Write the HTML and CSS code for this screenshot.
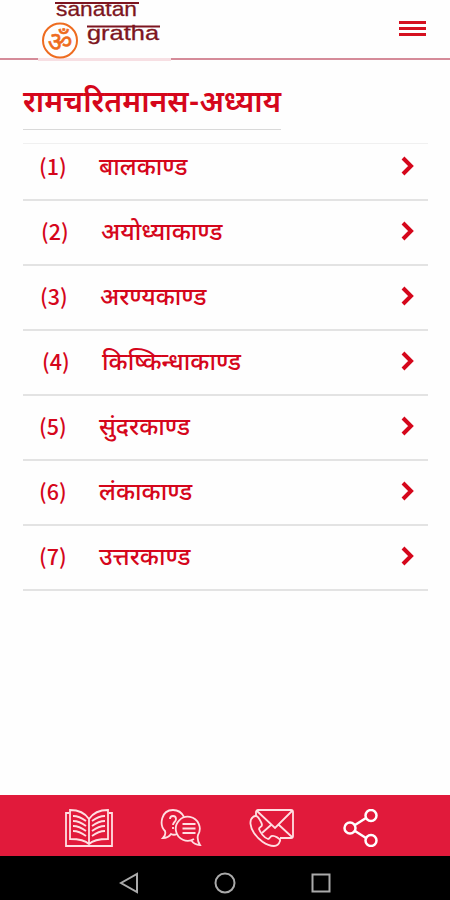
FILE: index.html
```html
<!DOCTYPE html>
<html lang="hi">
<head>
    <meta charset="UTF-8">
    <meta name="viewport" content="width=device-width, initial-scale=1.0">
    <title>रामचरितमानस-अध्याय</title>
    <link rel="stylesheet" href="styles.css">
</head>
<body>
    <!-- Header -->
    <header class="header">
        <svg class="logo" width="134" height="61" viewBox="38 0 134 61">
            <rect class="logo-base" x="38" y="58" width="133" height="3"/>
            <circle class="om-ring" cx="60" cy="40.5" r="17"/>
            <text class="om" x="60" y="50.5" text-anchor="middle">ॐ</text>
            <path class="logo-bar" d="M55 3H139M87 26.500H160"/>
            <text class="logo-text" x="56" y="16" textLength="81" lengthAdjust="spacingAndGlyphs">sanatan</text>
            <text class="logo-text" x="87" y="39.5" textLength="72" lengthAdjust="spacingAndGlyphs">gratha</text>
        </svg>
        <div class="menu">
            <span></span>
            <span></span>
            <span></span>
        </div>
    </header>

    <!-- Chapter list -->
    <main class="content">
        <h1>रामचरितमानस-अध्याय</h1>
        <ul class="chapters">
            <li>
                <span class="num">(1)</span><span class="name">बालकाण्ड</span>
                <svg class="arrow" width="14" height="20" viewBox="0 0 14 20"><path d="M2 2l8 8-8 8"/></svg>
            </li>
            <li class="in-2">
                <span class="num">(2)</span><span class="name">अयोध्याकाण्ड</span>
                <svg class="arrow" width="14" height="20" viewBox="0 0 14 20"><path d="M2 2l8 8-8 8"/></svg>
            </li>
            <li class="in-1">
                <span class="num">(3)</span><span class="name">अरण्यकाण्ड</span>
                <svg class="arrow" width="14" height="20" viewBox="0 0 14 20"><path d="M2 2l8 8-8 8"/></svg>
            </li>
            <li class="in-3">
                <span class="num">(4)</span><span class="name">किष्किन्धाकाण्ड</span>
                <svg class="arrow" width="14" height="20" viewBox="0 0 14 20"><path d="M2 2l8 8-8 8"/></svg>
            </li>
            <li>
                <span class="num">(5)</span><span class="name">सुंदरकाण्ड</span>
                <svg class="arrow" width="14" height="20" viewBox="0 0 14 20"><path d="M2 2l8 8-8 8"/></svg>
            </li>
            <li>
                <span class="num">(6)</span><span class="name">लंकाकाण्ड</span>
                <svg class="arrow" width="14" height="20" viewBox="0 0 14 20"><path d="M2 2l8 8-8 8"/></svg>
            </li>
            <li>
                <span class="num">(7)</span><span class="name">उत्तरकाण्ड</span>
                <svg class="arrow" width="14" height="20" viewBox="0 0 14 20"><path d="M2 2l8 8-8 8"/></svg>
            </li>
        </ul>
    </main>

    <!-- Bottom tabs -->
    <nav class="tabs">
        <!-- book -->
        <svg width="48" height="38" viewBox="0 0 48 38">
            <path d="M4 4H1v33h46V4h-3"/>
            <path d="M24 10C20 4 13 1 5 1v29c8 0 15 1 19 5 4-4 11-5 19-5V1C35 1 28 4 24 10v25"/>
            <path d="M8 7c5 0 9 2 13 5M8 12c5 0 9 2 13 5M8 17c5 0 9 2 13 5M8 22c5 0 9 2 13 5M40 7c-5 0-9 2-13 5M40 12c-5 0-9 2-13 5M40 17c-5 0-9 2-13 5M40 22c-5 0-9 2-13 5"/>
        </svg>
        <!-- questions -->
        <svg width="42" height="38" viewBox="0 0 42 38">
            <path d="M17 25c-2 1-4 1-6 0-2 3-5 4-8 4 2-2 3-4 2-7C-1 16 1 1 13 1c5 0 9 3 11 7"/>
            <path d="M34 30a12 12 0 1 1 4-4c-1 4 0 7 2 10-4 0-7-2-9-5"/>
            <path d="M22.500 15h13M22.500 19.500h13M22.500 24h13"/>
            <path d="M10 10c0-4 6-4 6 0 0 3-3 3-3 6M13 18v2"/>
        </svg>
        <!-- phone and mail -->
        <svg width="45" height="38" viewBox="0 0 45 38">
            <path d="M7 7V3c0-1 1-2 2-2h33c1 0 2 1 2 2v24c0 1-1 2-2 2H31"/>
            <path d="M8 2l18 17L43 2M30 16l13 12M22 16l-9 8"/>
            <path d="M4 8C0 11 1 18 5 24s12 13 20 13c3 0 5-2 6-5 1-2-6-6-8-5-2 0-2 3-4 3-4-1-8-7-9-10 0-2 3-2 3-4S9 7 7 7c-1 0-2 0-3 1z"/>
        </svg>
        <!-- share -->
        <svg class="share" width="36" height="38" viewBox="0 0 36 38">
            <circle cx="7" cy="19" r="5.500"/>
            <circle cx="28" cy="6.500" r="5.500"/>
            <circle cx="28" cy="31.500" r="5.500"/>
            <path d="M12 16l11-7M12 22l11 7"/>
        </svg>
    </nav>

    <!-- System buttons -->
    <footer class="system">
        <svg width="20" height="22" viewBox="0 0 20 22"><path d="M18 2v18L2 11z"/></svg>
        <svg width="22" height="22" viewBox="0 0 22 22"><circle cx="11" cy="11" r="9.500"/></svg>
        <svg width="20" height="22" viewBox="0 0 20 22"><path d="M1.500 2.500h17v17h-17z"/></svg>
    </footer>
</body>
</html>
```
FILE: styles.css
```css
* {
    box-sizing: border-box;
}

body {
    margin: 0;
    height: 900px;
    display: flex;
    flex-direction: column;
    background-color: #fefefe;
    color: #d5061b;
    font-family: "Noto Sans Devanagari", "Noto Sans CJK SC", "Noto Sans", sans-serif;
    overflow: hidden;
}

svg {
    display: block;
    fill: none;
}

/* Header */
.header {
    height: 60px;
    display: flex;
    align-items: flex-start;
    justify-content: space-between;
    padding: 0 24px 0 38px;
    border-bottom: 2px solid #d58b99;
}

.logo {
    overflow: visible;
}

.logo-base {
    fill: #f7dfe3;
}

.logo-text {
    font-family: "Liberation Sans", sans-serif;
    font-size: 21px;
    fill: #7d1520;
    stroke: #7d1520;
    stroke-width: 0.3;
}

.logo-bar {
    stroke: #7d1520;
    stroke-width: 2;
}

.om-ring {
    stroke: #ee6c20;
    stroke-width: 2;
}

.om {
    font-size: 27px;
    fill: #ee6c20;
    stroke: #ee6c20;
    stroke-width: 0.5;
}

.menu {
    display: flex;
    flex-direction: column;
    gap: 3px;
    margin-top: 21px;
}

.menu span {
    width: 27px;
    height: 3px;
    background-color: #d5101f;
}

/* Chapters */
.content {
    flex: 1;
    padding: 0 22px 0 23px;
}

h1 {
    width: 258px;
    height: 70px;
    margin: 0 0 13px;
    padding-top: 22px;
    border-bottom: 1px solid #d9d9d9;
    font-size: 29.900px;
    line-height: 46px;
    font-weight: 600;
    white-space: nowrap;
}

.chapters {
    list-style: none;
    margin: 0;
    padding: 0;
    border-top: 1px solid #f0f0f0;
}

.chapters li {
    display: flex;
    align-items: center;
    height: 65px;
    padding: 0 13px 4px 16px;
    border-bottom: 2px solid #e3e3e3;
    font-size: 24.300px;
    line-height: 30px;
    font-weight: 500;
    white-space: nowrap;
}

.chapters li:first-child {
    height: 57px;
    padding-bottom: 12px;
}

.chapters .in-1 {
    padding-left: 17px;
}

.chapters .in-2 {
    padding-left: 18px;
}

.chapters .in-3 {
    padding-left: 19px;
}

.num {
    width: 60px;
    font-family: "Noto Sans CJK SC", sans-serif;
    font-size: 21.500px;
}

.name {
    padding-top: 7px;
}

.arrow {
    margin-left: auto;
    stroke: #d5061b;
    stroke-width: 4;
}

/* Bottom tabs */
.tabs {
    height: 61px;
    display: flex;
    align-items: center;
    padding: 4px 0 0 65px;
    background-color: #e11a3b;
    stroke: #ffdfe2;
    stroke-width: 1.8;
}

.tabs svg + svg {
    margin-left: 47px;
}

.tabs .share {
    stroke: #fff;
    stroke-width: 2.5;
}

.tabs svg + .share {
    margin-left: 49px;
}

.system {
    height: 44px;
    display: flex;
    align-items: center;
    gap: 75px;
    padding: 10px 0 0 119px;
    background-color: #000;
    stroke: #aaa;
    stroke-width: 2;
}
```
